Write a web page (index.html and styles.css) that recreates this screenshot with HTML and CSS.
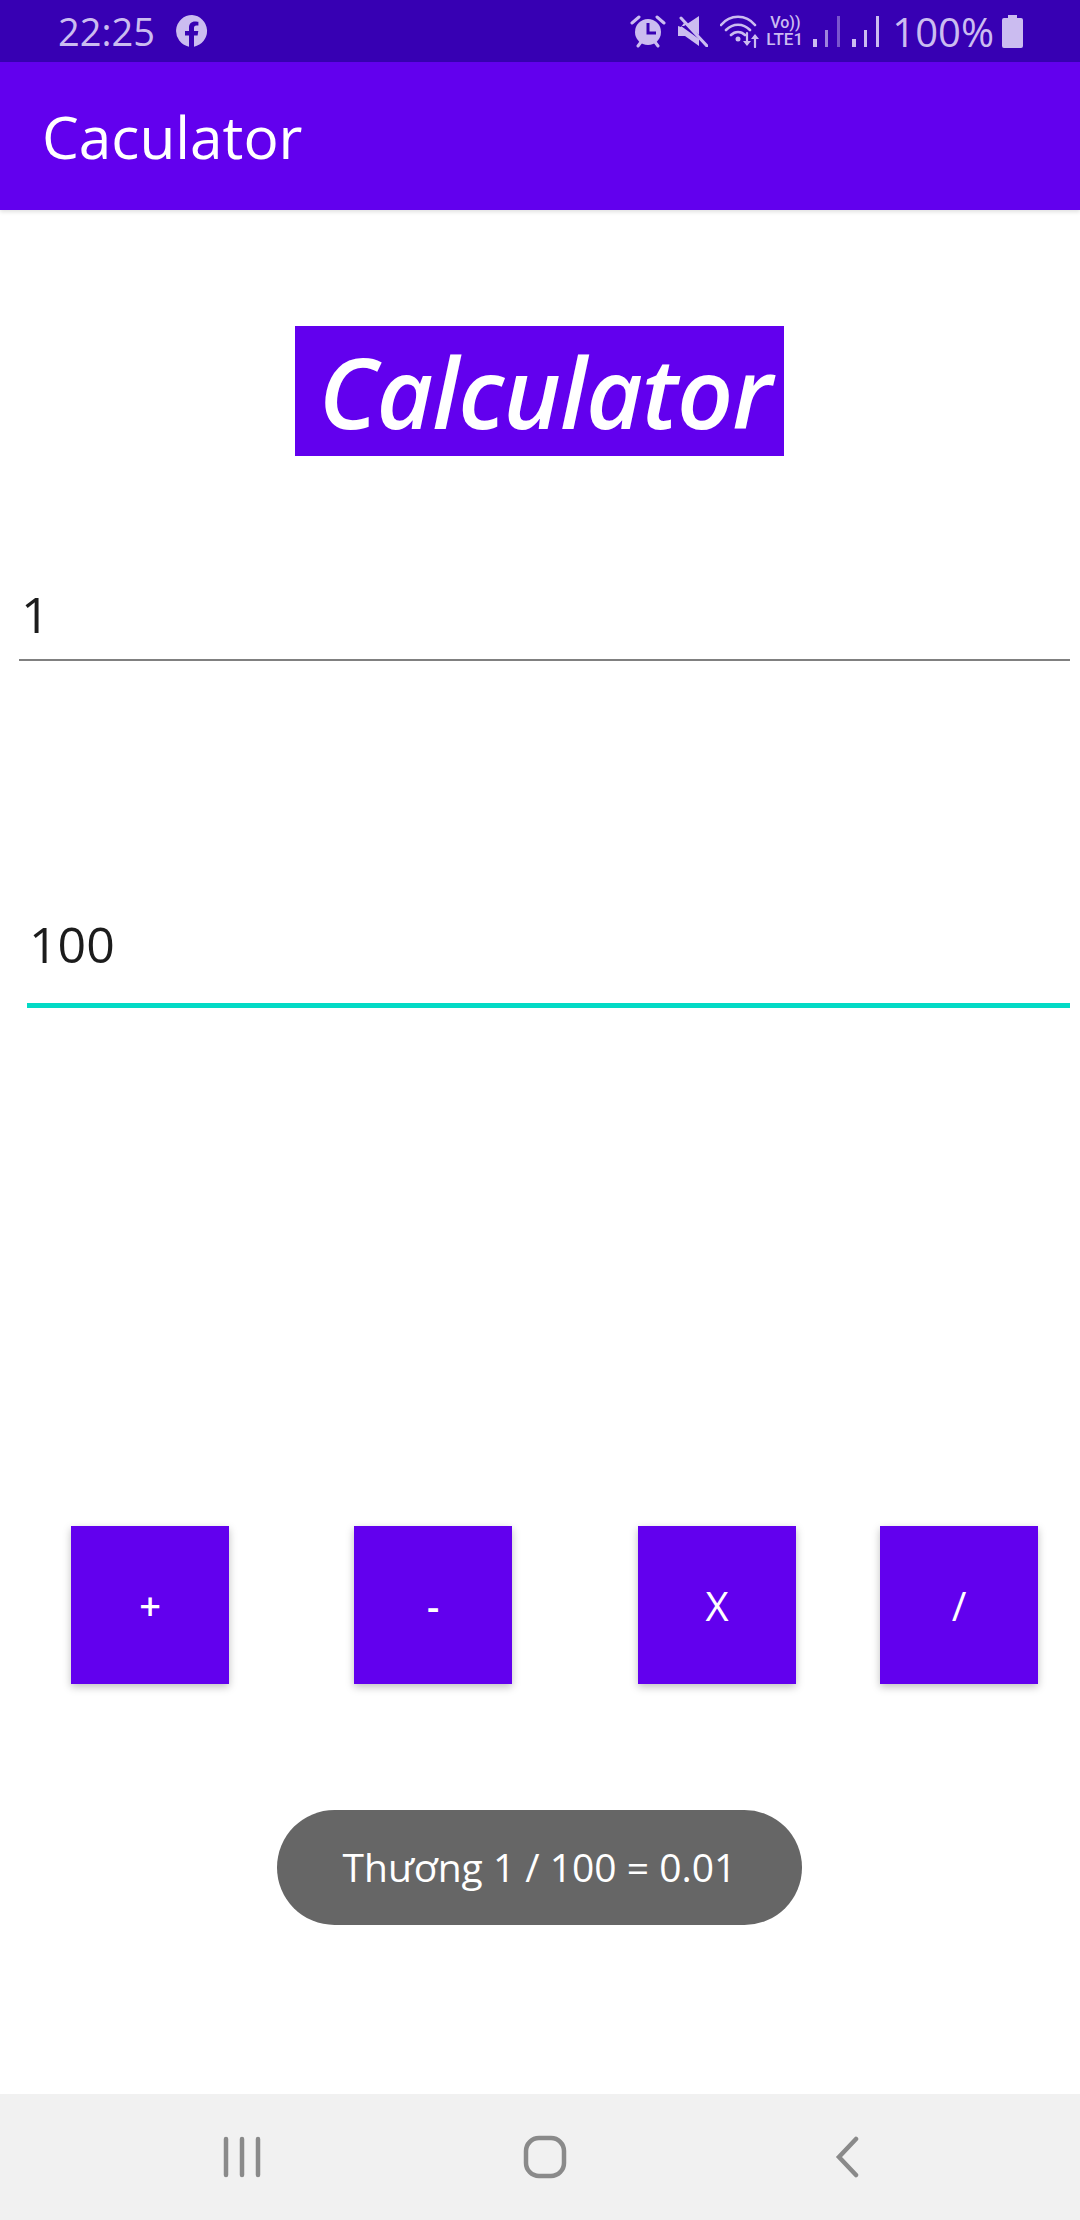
FILE: index.html
```html
<!DOCTYPE html>
<html lang="en">

<head>
    <meta charset="UTF-8">
    <meta name="viewport" content="width=device-width, initial-scale=1.0">
    <title>Caculator</title>
    <link rel="stylesheet" href="styles.css">
</head>

<body>
    <div class="status-bar">
        <div class="status-left">
            <span class="clock">22:25</span>
            <svg class="fb-icon" width="32" height="32" viewBox="0 0 32 32">
                <path class="status-fill" d="M16 0a16 16 0 0 0-3 31.7V20.5H9v-4.5h4v-3.4c0-4 2.4-6.2 6-6.2 1.700 0 3.400.3 3.400.3v3.900h-1.900c-1.900 0-2.500 1.200-2.500 2.400V16h4.300l-.7 4.500H18v11.200A16 16 0 0 0 16 0z"/>
            </svg>
        </div>
        <div class="status-right">
            <svg class="alarm-icon" width="36" height="34" viewBox="0 0 36 34">
                <path class="status-line" d="M2 9 9 3M34 9 27 3M8 32l3-4M28 32l-3-4" stroke-width="3"/>
                <circle class="status-fill" cx="18" cy="18" r="13"/>
                <path d="M18 9v10h8" fill="none" stroke="#3700b3" stroke-width="3"/>
            </svg>
            <svg class="mute-icon" width="30" height="32" viewBox="0 0 30 32">
                <path class="status-fill" d="M0 11h6L21 1v19L6 8 3 12zM0 11v10h7l14 10v-7L3 11z"/>
                <path class="status-line" d="M3 3l26 28" stroke-width="3"/>
            </svg>
            <svg class="wifi-icon" width="42" height="34" viewBox="0 0 42 34">
                <path class="status-line" d="M1 11C10 0 26 0 35 11M6 16c7-7 17-7 24 0M11 21c4-4 10-4 14 0" stroke-width="2.600" fill="none"/>
                <circle class="status-fill" cx="18" cy="25" r="2.500"/>
                <path class="status-line" d="M27 19v11M35 33V22" stroke-width="2.200"/>
                <path class="status-fill" d="M23 27h8l-4 5zM31 25h8l-4-5z"/>
            </svg>
            <div class="volte">
                <span class="volte-top">Vo))</span>
                <span class="volte-bottom">LTE1</span>
            </div>
            <svg class="signal-icon" width="28" height="32" viewBox="0 0 28 32">
                <rect class="status-fill" x="0" y="24" width="4" height="8"/>
                <rect class="status-fill" x="12" y="15" width="3" height="17" opacity="0.7"/>
                <rect class="status-fill" x="24" y="1" width="3" height="31" opacity="0.45"/>
            </svg>
            <svg class="signal-icon signal-last" width="28" height="32" viewBox="0 0 28 32">
                <rect class="status-fill" x="0" y="24" width="4" height="8"/>
                <rect class="status-fill" x="12" y="15" width="3" height="17"/>
                <rect class="status-fill" x="24" y="1" width="3" height="31"/>
            </svg>
            <span class="battery-text">100%</span>
            <svg class="battery-icon" width="21" height="33" viewBox="0 0 21 33">
                <path class="status-fill" d="M6 0h9v3h4a2 2 0 0 1 2 2v26a2 2 0 0 1-2 2H2a2 2 0 0 1-2-2V5a2 2 0 0 1 2-2h4z"/>
            </svg>
        </div>
    </div>

    <div class="app-bar">Caculator</div>

    <div class="content">
        <h1 class="heading">Calculator</h1>

        <div class="field field-first">1</div>
        <div class="field field-focused">100</div>

        <div class="buttons">
            <button class="op op-small">+</button>
            <button class="op op-small">-</button>
            <button class="op">X</button>
            <button class="op">/</button>
        </div>

        <div class="toast">Thương 1 / 100 = 0.01</div>
    </div>

    <div class="nav-bar">
        <svg class="nav-recent" width="40" height="42" viewBox="0 0 40 42">
            <path class="nav-line" d="M4 3v36M20 3v36M36 3v36" stroke-width="4.500"/>
        </svg>
        <svg class="nav-home" width="44" height="44" viewBox="0 0 44 44">
            <rect x="3" y="3" width="38" height="38" rx="13" fill="none" stroke="#8a8a8a" stroke-width="4.500"/>
        </svg>
        <svg class="nav-back" width="24" height="42" viewBox="0 0 24 42">
            <path class="nav-line" d="M21 3 4 21l17 18" stroke-width="4.500" fill="none"/>
        </svg>
    </div>
</body>

</html>
```

FILE: styles.css
```css
body {
    font-family: "Open Sans", "Noto Sans", sans-serif;
    background-color: #ffffff;
    margin: 0;
    width: 1080px;
    height: 2220px;
    display: flex;
    flex-direction: column;
    overflow: hidden;
}

/* status bar */
.status-bar {
    height: 62px;
    background-color: #3700b3;
    color: #cbbcf0;
    display: flex;
    justify-content: space-between;
    align-items: center;
    flex-shrink: 0;
}

.status-left {
    display: flex;
    align-items: center;
    padding-left: 58px;
}

.clock {
    font-size: 38px;
    width: 118px;
}

.status-right {
    display: flex;
    align-items: center;
    padding-right: 57px;
}

.status-fill {
    fill: #cbbcf0;
}

.status-line {
    stroke: #cbbcf0;
    stroke-linecap: round;
}

.alarm-icon {
    margin-right: 12px;
}

.mute-icon {
    margin-right: 12px;
}

.wifi-icon {
    margin-right: 4px;
}

.volte {
    width: 39px;
    display: flex;
    flex-direction: column;
    font-family: "Roboto", sans-serif;
    font-weight: 500;
    line-height: 16px;
    margin-right: 8px;
}

.volte-top {
    font-size: 16px;
    padding-left: 4px;
}

.volte-bottom {
    font-size: 17px;
}

.signal-icon {
    margin-right: 11px;
}

.signal-last {
    margin-right: 12px;
}

.battery-text {
    font-size: 40px;
    margin-right: 8px;
}

/* app bar */
.app-bar {
    height: 148px;
    background-color: #6200ee;
    color: #ffffff;
    font-size: 58.500px;
    line-height: 148px;
    padding-left: 42px;
    flex-shrink: 0;
    box-shadow: 0 2px 4px rgba(0, 0, 0, 0.12);
}

.content {
    flex: 1;
    position: relative;
}

.heading {
    width: 489px;
    height: 130px;
    margin: 116px 0 0 295px;
    background-color: #6200ee;
    color: #ffffff;
    font-size: 98px;
    font-style: italic;
    font-weight: 600;
    line-height: 130px;
    text-align: center;
    text-indent: 11px;
    letter-spacing: -1px;
}

.field {
    color: #1c1c1c;
    font-size: 50px;
    line-height: 68px;
}

.field-first {
    margin: 124px 10px 0 19px;
    padding: 0 0 11px 2px;
    border-bottom: 2px solid #808080;
}

.field-focused {
    margin: 249px 10px 0 27px;
    padding: 0 0 25px 2px;
    border-bottom: 5px solid #03dac5;
}

.buttons {
    display: flex;
    margin: 518px 0 0 71px;
}

.op {
    width: 158px;
    height: 158px;
    padding: 0;
    border: none;
    background-color: #6200ee;
    color: #ffffff;
    font-family: "Open Sans", "Noto Sans", sans-serif;
    font-size: 40px;
    box-shadow: 0 3px 8px rgba(0, 0, 0, 0.25);
}

.op-small {
    font-size: 38px;
    font-weight: 600;
}

.op:nth-child(1) {
    margin-right: 125px;
}

.op:nth-child(2) {
    margin-right: 126px;
}

.op:nth-child(3) {
    margin-right: 84px;
}

/* toast sits over the content */
.toast {
    position: absolute;
    left: 277px;
    top: 1600px;
    width: 525px;
    height: 115px;
    border-radius: 58px;
    background-color: #666666;
    color: #ffffff;
    font-size: 39px;
    line-height: 113px;
    text-align: center;
}

/* navigation bar */
.nav-bar {
    height: 126px;
    background-color: #f1f1f1;
    flex-shrink: 0;
    position: relative;
    display: flex;
    align-items: center;
}

.nav-line {
    stroke: #8a8a8a;
    stroke-linecap: round;
}

.nav-recent {
    margin-left: 222px;
}

.nav-home {
    margin-left: 261px;
}

.nav-back {
    margin-left: 268px;
}
```
